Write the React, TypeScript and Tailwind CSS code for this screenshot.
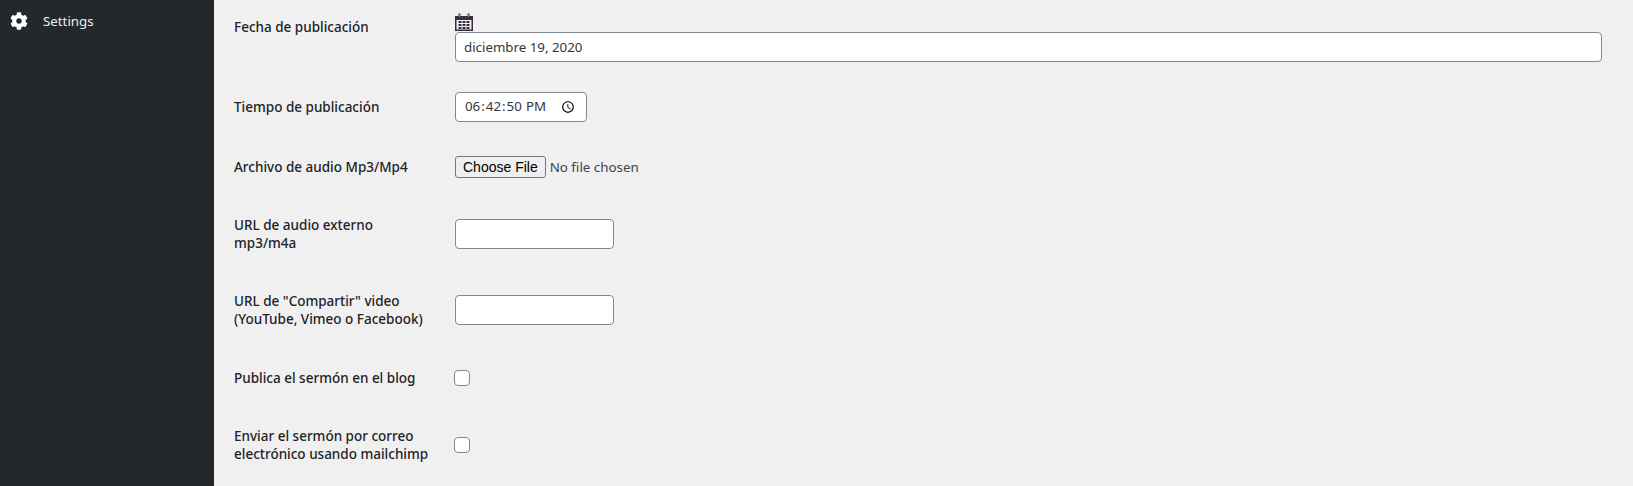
import React from 'react';
import { FaCog } from 'react-icons/fa';

const labelClass = 'w-[221px] shrink-0 pr-2 text-[13.5px] font-medium leading-[18px] text-[#1d2327]';
const inputClass =
  'h-[30px] rounded-[4px] border border-[#7e8993] bg-white px-2 text-[13.3px] text-[#32373c] outline-none';
const checkClass =
  '-ml-px block h-4 w-4 appearance-none rounded-[4px] border border-[#7e8993] bg-white';

const CalendarIcon = () => (
  <svg viewBox="0 0 18 18" className="block h-[18px] w-[18px]">
    <path fill="#3a2f3d" d="M0 3h3.5V1.2a1 1 0 0 1 2 0V3h7V1.2a1 1 0 0 1 2 0V3H18v15H0z" />
    <path fill="#f0f0f1" d="M1.5 7h15v9.5h-15z" />
    <path fill="#b9a9c4" d="M4 1h.6v3H4zM13 1h.6v3H13z" />
    <path
      fill="#3a2f3d"
      d="M3.5 8h3v2h-3zM7.5 8h3v2h-3zM11.5 8h3v2h-3zM3.5 11h3v2h-3zM7.5 11h3v2h-3zM11.5 11h3v2h-3zM3.5 14h3v2h-3zM7.5 14h3v2h-3zM11.5 14h3v2h-3z"
    />
  </svg>
);

export default function App() {
  return (
    <div className="flex h-[486px] w-full overflow-hidden bg-[#f0f0f1] font-['Noto_Sans','Open_Sans',sans-serif]">
      {/* Sidebar */}
      <aside className="w-[214px] shrink-0 bg-[#23282d]">
        <div className="flex items-center pl-[10px] pt-[12px] text-[13.3px] leading-[18px] text-[#eeeeee]">
          <FaCog className="h-[18px] w-[18px] text-white" />
          <span className="ml-[15px]">Settings</span>
        </div>
      </aside>

      {/* Form */}
      <main className="flex-1 pl-[20px] pr-[31px] pt-[13px]">
        <div className="flex items-start">
          <label className={`${labelClass} mt-[5px]`}>Fecha de publicación</label>
          <div className="flex-1">
            <CalendarIcon />
            <input
              type="text"
              defaultValue="diciembre 19, 2020"
              className={`${inputClass} mt-px w-full`}
            />
          </div>
        </div>

        <div className="mt-[30px] flex items-center">
          <label className={labelClass}>Tiempo de publicación</label>
          <input
            type="time"
            step={1}
            defaultValue="18:42:50"
            className={`${inputClass} w-[132px]`}
          />
        </div>

        <div className="mt-[34px] flex items-center">
          <label className={labelClass}>Archivo de audio Mp3/Mp4</label>
          <input
            type="file"
            className="text-[13.33px] text-[#3c434a] file:mr-[4px] file:h-[22px] file:rounded-[3px] file:border file:border-solid file:border-[#767676] file:bg-[#efefef] file:px-[7px] file:font-['Liberation_Sans',sans-serif] file:text-[14px] file:text-black"
          />
        </div>

        <div className="mt-[38px] flex items-center">
          <label className={labelClass}>
            URL de audio externo
            <br />
            mp3/m4a
          </label>
          <input type="text" className={`${inputClass} w-[159px]`} />
        </div>

        <div className="mt-[40px] flex items-center">
          <label className={labelClass}>
            URL de "Compartir" video
            <br />
            (YouTube, Vimeo o Facebook)
          </label>
          <input type="text" className={`${inputClass} w-[159px]`} />
        </div>

        <div className="mt-[41px] flex items-center">
          <label className={labelClass}>Publica el sermón en el blog</label>
          <input type="checkbox" className={checkClass} />
        </div>

        <div className="mt-[40px] flex items-center">
          <label className={labelClass}>
            Enviar el sermón por correo
            <br />
            electrónico usando mailchimp
          </label>
          <input type="checkbox" className={checkClass} />
        </div>
      </main>
    </div>
  );
}
